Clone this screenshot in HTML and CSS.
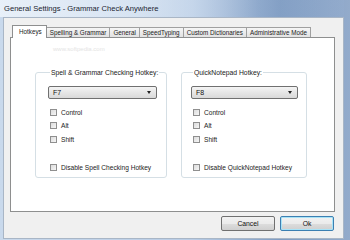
FILE: index.html
```html
<!DOCTYPE html>
<html lang="en">
<head>
  <meta charset="UTF-8" />
  <title>General Settings - Grammar Check Anywhere</title>
  <link rel="stylesheet" href="styles.css">
</head>
<body>
  <div class="window">
    <div class="titlebar">General Settings - Grammar Check Anywhere</div>

    <div class="client">
      <div class="tabs">
        <div class="tab active">Hotkeys</div>
        <div class="tab">Spelling &amp; Grammar</div>
        <div class="tab">General</div>
        <div class="tab">SpeedTyping</div>
        <div class="tab">Custom Dictionaries</div>
        <div class="tab">Administrative Mode</div>
      </div>

      <div class="panel">
        <div class="watermark">www.softpedia.com</div>
        <div class="groups">
          <fieldset class="group group-left">
            <legend>Spell &amp; Grammar Checking Hotkey:</legend>
            <div class="combo"><span>F7</span><span class="arrow"></span></div>
            <label class="check"><span class="box"></span>Control</label>
            <label class="check"><span class="box"></span>Alt</label>
            <label class="check"><span class="box"></span>Shift</label>
            <label class="check disable"><span class="box"></span>Disable Spell Checking Hotkey</label>
          </fieldset>

          <fieldset class="group group-right">
            <legend>QuickNotepad Hotkey:</legend>
            <div class="combo"><span>F8</span><span class="arrow"></span></div>
            <label class="check"><span class="box"></span>Control</label>
            <label class="check"><span class="box"></span>Alt</label>
            <label class="check"><span class="box"></span>Shift</label>
            <label class="check disable"><span class="box"></span>Disable QuickNotepad Hotkey</label>
          </fieldset>
        </div>
      </div>

      <div class="buttons">
        <button class="btn">Cancel</button>
        <button class="btn default">Ok</button>
      </div>
    </div>
  </div>
</body>
</html>
```

FILE: styles.css
```css
* {
  box-sizing: border-box;
  font-family: "Liberation Sans", Arial, sans-serif;
}

body {
  margin: 0;
  width: 350px;
  height: 240px;
  overflow: hidden;
}

.window {
  width: 350px;
  height: 240px;
  display: flex;
  flex-direction: column;
  padding: 0 6px 1px 3px;
  background: linear-gradient(90deg, #c9d9ec 0%, #b9cde6 55%, #7f9cc2 80%, #93abcb 100%);
}

.titlebar {
  height: 17px;
  flex-shrink: 0;
  font-size: 7.6px;
  line-height: 17px;
  color: #1b2430;
  margin-left: -3px;
  padding-left: 4px;
  background: linear-gradient(90deg, rgba(235, 242, 250, 0.9) 0%, rgba(225, 235, 246, 0.7) 40%, rgba(150, 175, 210, 0.2) 75%);
}

.client {
  flex: 1;
  background: #f0f0f0;
  border: 1px solid #a9b6c6;
  display: flex;
  flex-direction: column;
  padding: 0 8px 0 6px;
}

.tabs {
  display: flex;
  align-items: flex-end;
  height: 19px;
  padding-left: 2px;
}

.tab {
  height: 10px;
  padding: 0 3px;
  font-size: 6.3px;
  line-height: 10px;
  color: #222;
  border: 1px solid #a0a0a0;
  border-bottom: none;
  margin-right: -1px;
  background: linear-gradient(#f6f6f6, #e2e2e2);
  white-space: nowrap;
}

.tab.active {
  height: 13px;
  line-height: 11px;
  background: #fff;
  position: relative;
  z-index: 1;
  margin-bottom: -1px;
  padding: 0 4px 0 6px;
  border-color: #8e8f8f;
}

.panel {
  height: 175px;
  background: #fff;
  border: 1px solid #8e8f8f;
  display: flex;
  flex-direction: column;
  padding: 8px 0 0 24px;
}

.watermark {
  font-size: 6px;
  color: #e4e4e4;
  margin-left: 18px;
  height: 14px;
}

.groups {
  display: flex;
  gap: 14px;
  margin-top: 9px;
}

.group {
  margin: 0;
  border: 1px solid #d5dfe5;
  border-radius: 3px;
  padding: 10px 0 0 12px;
  height: 109px;
  display: flex;
  flex-direction: column;
}

.group-left {
  width: 132px;
}

.group-right {
  width: 126px;
  padding-left: 9px;
}

.group legend {
  font-size: 6.8px;
  color: #222;
  padding: 0 1px;
  margin-left: 2px;
}

.combo {
  width: 109px;
  height: 13px;
  border: 1px solid #707070;
  border-radius: 2px;
  background: linear-gradient(#f4f4f4, #e6e6e6 50%, #d9d9d9);
  display: flex;
  justify-content: space-between;
  align-items: center;
  padding: 0 5px 0 4px;
  font-size: 7px;
  color: #111;
  margin-bottom: 9.5px;
}

.group-right .combo {
  width: 107px;
}

.arrow {
  width: 0;
  height: 0;
  border-left: 2.5px solid transparent;
  border-right: 2.5px solid transparent;
  border-top: 3px solid #222;
}

.check {
  display: flex;
  align-items: center;
  gap: 4px;
  font-size: 6.6px;
  color: #222;
  height: 7px;
  margin-left: 2px;
  margin-bottom: 6.5px;
}

.check.disable {
  margin-top: 14.5px;
}

.box {
  width: 7px;
  height: 7px;
  border: 1px solid #8f8f8f;
  background: linear-gradient(135deg, #dcdcdc, #f6f6f6);
  flex-shrink: 0;
}

.buttons {
  display: flex;
  justify-content: flex-end;
  gap: 5px;
  margin-top: 4px;
  padding-right: 1px;
}

.btn {
  width: 54px;
  height: 15px;
  font-size: 6.8px;
  color: #111;
  border: 1px solid #707070;
  border-radius: 2px;
  background: linear-gradient(#f2f2f2, #ebebeb 50%, #dddddd 51%, #cfcfcf);
  padding: 0;
}

.btn.default {
  border-color: #3c7fb1;
  box-shadow: inset 0 0 0 1px #a8e3f7;
}
```
